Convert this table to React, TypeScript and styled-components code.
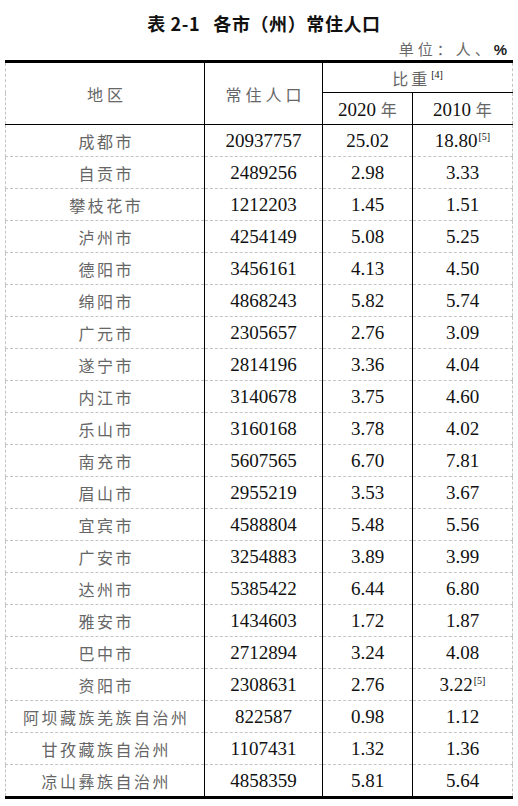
import React from "react";
import styled, { createGlobalStyle } from "styled-components";

const Global = createGlobalStyle`
  html, body { margin: 0; padding: 0; background: #fff; }
  body { font-family: "Liberation Serif", "Noto Sans CJK SC", serif; }
`;

const Page = styled.div`
  width: 518px;
  padding: 0 6px 0 5px;
  box-sizing: border-box;
`;

const Title = styled.h1`
  margin: 0;
  padding-top: 12px;
  padding-left: 11px;
  height: 22px;
  line-height: 22px;
  text-align: center;
  font-family: "Noto Sans CJK SC", sans-serif;
  font-size: 18px;
  font-weight: 700;
  color: #111;
  letter-spacing: 0.6px;
`;

const TitleGap = styled.span`
  display: inline-block;
  width: 13px;
`;

const Unit = styled.div`
  height: 26px;
  line-height: 29px;
  text-align: right;
  padding-right: 5px;
  font-family: "Noto Sans CJK SC", sans-serif;
  font-size: 15px;
  color: #6a6a6a;
  letter-spacing: 4px;
  & b {
    font-family: "Liberation Sans", sans-serif;
    font-weight: 700;
    color: #222;
    letter-spacing: 0;
  }
`;

const Table = styled.table`
  width: 507px;
  border-collapse: collapse;
  table-layout: fixed;
  border-top: 3px solid #000;
  border-bottom: 3px solid #000;
  border-left: 1px dashed #c4c4c4;
  border-right: 1px dashed #c4c4c4;
`;

const Cell = styled.td<{ $first?: boolean }>`
  padding: 0;
  height: 31px;
  text-align: center;
  vertical-align: middle;
  border-bottom: 1px dashed #c4c4c4;
  border-left: ${(p) => (p.$first ? "1px dashed #c4c4c4" : "1px solid #000")};
  font-size: 19px;
  color: #111;
  white-space: nowrap;
`;

const HeadCell = styled.th<{ $first?: boolean }>`
  padding: 0;
  font-weight: 400;
  text-align: center;
  vertical-align: middle;
  border-left: ${(p) => (p.$first ? "1px dashed #c4c4c4" : "1px solid #000")};
  border-bottom: 1px solid #000;
  font-size: 19px;
  color: #111;
  white-space: nowrap;
`;

const Cn = styled.span<{ $sp?: number; $trim?: boolean }>`
  font-family: "Noto Sans CJK SC", sans-serif;
  font-size: 16px;
  color: #666;
  letter-spacing: ${(p) => p.$sp ?? 2.5}px;
  margin-right: ${(p) => (p.$trim === false ? 0 : -(p.$sp ?? 2.5))}px;
`;

const Sup = styled.sup`
  font-size: 10px;
  vertical-align: 7px;
  line-height: 0;
  margin-left: 1px;
`;

type Row = [string, string, string, string, boolean?];

const rows: Row[] = [
  ["成都市", "20937757", "25.02", "18.80", true],
  ["自贡市", "2489256", "2.98", "3.33"],
  ["攀枝花市", "1212203", "1.45", "1.51"],
  ["泸州市", "4254149", "5.08", "5.25"],
  ["德阳市", "3456161", "4.13", "4.50"],
  ["绵阳市", "4868243", "5.82", "5.74"],
  ["广元市", "2305657", "2.76", "3.09"],
  ["遂宁市", "2814196", "3.36", "4.04"],
  ["内江市", "3140678", "3.75", "4.60"],
  ["乐山市", "3160168", "3.78", "4.02"],
  ["南充市", "5607565", "6.70", "7.81"],
  ["眉山市", "2955219", "3.53", "3.67"],
  ["宜宾市", "4588804", "5.48", "5.56"],
  ["广安市", "3254883", "3.89", "3.99"],
  ["达州市", "5385422", "6.44", "6.80"],
  ["雅安市", "1434603", "1.72", "1.87"],
  ["巴中市", "2712894", "3.24", "4.08"],
  ["资阳市", "2308631", "2.76", "3.22", true],
  ["阿坝藏族羌族自治州", "822587", "0.98", "1.12"],
  ["甘孜藏族自治州", "1107431", "1.32", "1.36"],
  ["凉山彝族自治州", "4858359", "5.81", "5.64"],
];

const HeadRow1 = styled.tr`
  height: 31px;
`;
const HeadRow2 = styled.tr`
  height: 32px;
`;

export default function App() {
  return (
    <Page>
      <Global />
      <Title>
        表 2-1
        <TitleGap />
        各市（州）常住人口
      </Title>
      <Unit>
        单位：人、<b>%</b>
      </Unit>
      <Table>
        <colgroup>
          <col style={{ width: 199 }} />
          <col style={{ width: 118 }} />
          <col style={{ width: 90 }} />
          <col style={{ width: 100 }} />
        </colgroup>
        <thead>
          <HeadRow1>
            <HeadCell rowSpan={2} $first>
              <Cn $sp={4}>地区</Cn>
            </HeadCell>
            <HeadCell rowSpan={2}>
              <Cn $sp={4}>常住人口</Cn>
            </HeadCell>
            <HeadCell colSpan={2}>
              <Cn $sp={3} $trim={false}>比重</Cn>
              <Sup>[4]</Sup>
            </HeadCell>
          </HeadRow1>
          <HeadRow2>
            <HeadCell>
              2020 <Cn $sp={0}>年</Cn>
            </HeadCell>
            <HeadCell>
              2010 <Cn $sp={0}>年</Cn>
            </HeadCell>
          </HeadRow2>
        </thead>
        <tbody>
          {rows.map(([name, pop, a, b, note]) => (
            <tr key={name}>
              <Cell $first>
                <Cn>{name}</Cn>
              </Cell>
              <Cell>{pop}</Cell>
              <Cell>{a}</Cell>
              <Cell>
                {b}
                {note && <Sup>[5]</Sup>}
              </Cell>
            </tr>
          ))}
        </tbody>
      </Table>
    </Page>
  );
}
